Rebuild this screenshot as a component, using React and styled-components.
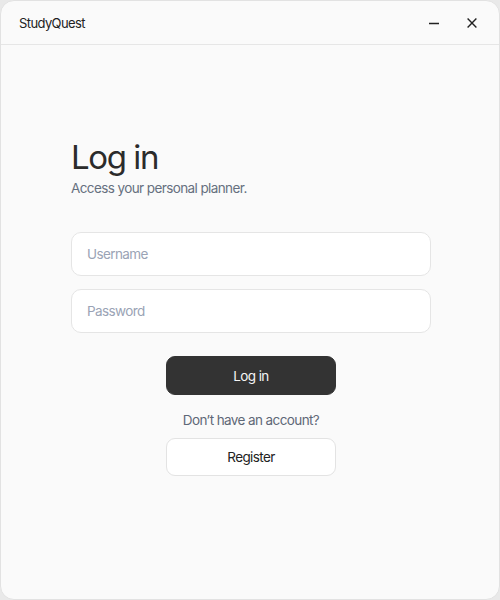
import React from "react";
import styled, { createGlobalStyle } from "styled-components";

const GlobalStyle = createGlobalStyle`
  html, body {
    margin: 0;
    padding: 0;
    background: #e9e9e9;
    font-family: Inter, "Noto Sans", sans-serif;
  }
`;

const Window = styled.div`
  box-sizing: border-box;
  width: 500px;
  height: 600px;
  background: #fafafa;
  border: 1px solid #e2e2e2;
  border-radius: 14px;
  overflow: hidden;
  display: flex;
  flex-direction: column;
`;

const TitleBar = styled.div`
  height: 43px;
  flex-shrink: 0;
  display: flex;
  align-items: center;
  padding: 0 12px 0 18px;
  border-bottom: 1px solid #e6e6e6;
`;

const AppName = styled.span`
  flex: 1;
  font-size: 13px;
  color: #222;
  letter-spacing: -0.6px;
`;

const WinButton = styled.button`
  width: 30px;
  height: 30px;
  margin-left: 8px;
  border: none;
  background: transparent;
  display: flex;
  align-items: center;
  justify-content: center;
  padding: 0;
  color: #222;
`;

const Content = styled.div`
  flex: 1;
  padding: 91px 68px 0 70px;
  display: flex;
  flex-direction: column;
`;

const Heading = styled.h1`
  margin: 0;
  font-size: 33px;
  font-weight: 400;
  color: #2b2b2b;
  letter-spacing: -1.4px;
  line-height: 42px;
`;

const Sub = styled.p`
  margin: 2px 0 0;
  font-size: 13.5px;
  color: #66707f;
  letter-spacing: -0.6px;
`;

const Form = styled.div`
  margin-top: 36px;
  display: flex;
  flex-direction: column;
  gap: 13px;
`;

const Input = styled.input`
  box-sizing: border-box;
  width: 100%;
  height: 44px;
  border: 1px solid #e5e5e5;
  border-radius: 10px;
  background: #fff;
  padding: 0 15px;
  font-family: inherit;
  font-size: 13.5px;
  letter-spacing: -0.6px;
  color: #222;
  outline: none;
  &::placeholder {
    color: #9aa3b5;
  }
`;

const Actions = styled.div`
  margin-top: 23px;
  display: flex;
  flex-direction: column;
  align-items: center;
`;

const Button = styled.button`
  box-sizing: border-box;
  width: 170px;
  height: ${(p) => (p.$primary ? "39px" : "38px")};
  border-radius: 9px;
  font-family: inherit;
  font-size: 13.5px;
  letter-spacing: -0.6px;
  border: 1px solid ${(p) => (p.$primary ? "#333" : "#e3e3e3")};
  background: ${(p) => (p.$primary ? "#333333" : "#ffffff")};
  color: ${(p) => (p.$primary ? "#f5f5f5" : "#222")};
`;

const Prompt = styled.p`
  margin: 17px 0 9px;
  font-size: 13.5px;
  color: #5f6877;
  letter-spacing: -0.6px;
  line-height: 17px;
`;

export default function App() {
  return (
    <>
      <GlobalStyle />
      <Window>
        <TitleBar>
          <AppName>StudyQuest</AppName>
          <WinButton aria-label="minimize">
            <svg width="10" height="10" viewBox="0 0 10 10">
              <path d="M0 5.5h10" stroke="currentColor" strokeWidth="1.4" />
            </svg>
          </WinButton>
          <WinButton aria-label="close">
            <svg width="10" height="10" viewBox="0 0 10 10">
              <path d="M0.6 0.6l8.8 8.8M9.4 0.6l-8.8 8.8" stroke="currentColor" strokeWidth="1.4" />
            </svg>
          </WinButton>
        </TitleBar>
        <Content>
          <Heading>Log in</Heading>
          <Sub>Access your personal planner.</Sub>
          <Form>
            <Input placeholder="Username" />
            <Input type="password" placeholder="Password" />
          </Form>
          <Actions>
            <Button $primary>Log in</Button>
            <Prompt>Don’t have an account?</Prompt>
            <Button>Register</Button>
          </Actions>
        </Content>
      </Window>
    </>
  );
}
